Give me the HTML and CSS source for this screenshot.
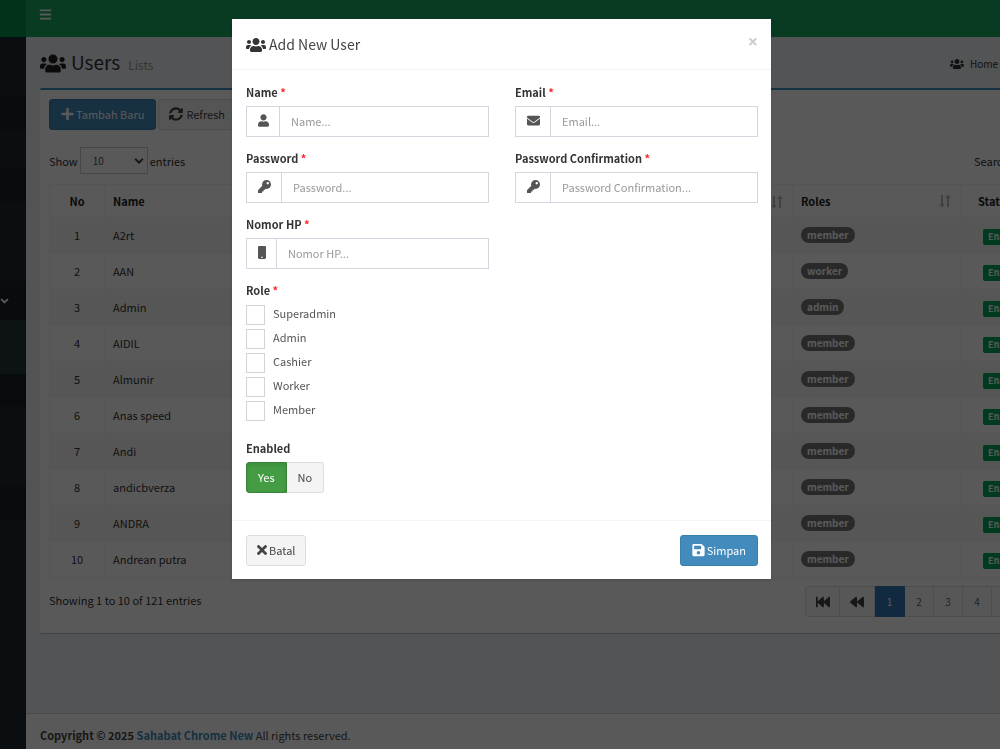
FILE: index.html
```html
<!DOCTYPE html>
<html lang="id">
<head>
<meta charset="utf-8">
<title>Users</title>
<link rel="stylesheet" href="styles.css">
</head>
<body>
<svg class="defs" aria-hidden="true">
  <symbol id="users" viewBox="0 0 640 512"><path d="M96 224c35 0 64-29 64-64s-29-64-64-64-64 29-64 64 29 64 64 64zm448 0c35 0 64-29 64-64s-29-64-64-64-64 29-64 64 29 64 64 64zm32 32h-64c-18 0-34 7-45 19 40 22 69 62 75 109h66c18 0 32-14 32-32v-32c0-35-29-64-64-64zm-256 0c62 0 112-50 112-112S382 32 320 32 208 82 208 144s50 112 112 112zm77 32h-8c-21 10-44 16-69 16s-48-6-69-16h-8c-64 0-115 52-115 115v29c0 26 22 48 48 48h288c26 0 48-22 48-48v-29c0-63-51-115-115-115zm-224-13c-11-12-27-19-45-19H64c-35 0-64 29-64 64v32c0 18 14 32 32 32h66c6-47 35-87 75-109z"/></symbol>
  <symbol id="bars" viewBox="0 0 448 512"><path d="M16 132h416c9 0 16-7 16-16V76c0-9-7-16-16-16H16C7 60 0 67 0 76v40c0 9 7 16 16 16zm0 160h416c9 0 16-7 16-16v-40c0-9-7-16-16-16H16c-9 0-16 7-16 16v40c0 9 7 16 16 16zm0 160h416c9 0 16-7 16-16v-40c0-9-7-16-16-16H16c-9 0-16 7-16 16v40c0 9 7 16 16 16z"/></symbol>
  <symbol id="plus" viewBox="0 0 448 512"><path d="M416 208H272V64c0-18-14-32-32-32h-32c-18 0-32 14-32 32v144H32c-18 0-32 14-32 32v32c0 18 14 32 32 32h144v144c0 18 14 32 32 32h32c18 0 32-14 32-32V304h144c18 0 32-14 32-32v-32c0-18-14-32-32-32z"/></symbol>
  <symbol id="sync" viewBox="0 0 512 512"><path d="M371 143c-32-30-73-47-117-47-78 0-146 54-165 128-1 5-6 9-12 9H20c-7 0-13-7-12-14C29 102 132 8 256 8c68 0 130 27 175 71l36-36c15-15 41-5 41 17v134c0 13-11 24-24 24H350c-21 0-32-26-17-41l38-34zM28 296h134c21 0 32 26 17 41l-39 34c32 30 73 47 117 47 78 0 146-54 165-128 1-5 6-9 12-9h57c8 0 13 7 12 14C483 410 380 504 256 504c-68 0-130-27-175-71l-36 36c-15 15-41 5-41-17V320c0-13 11-24 24-24z"/></symbol>
  <symbol id="user" viewBox="0 0 448 512"><path d="M224 256c71 0 128-57 128-128S295 0 224 0 96 57 96 128s57 128 128 128zm90 32h-17c-22 10-47 16-73 16s-51-6-73-16h-17C60 288 0 348 0 422v42c0 26 22 48 48 48h352c26 0 48-22 48-48v-42c0-74-60-134-134-134z"/></symbol>
  <symbol id="mail" viewBox="0 0 512 512"><path d="M502 191c4-3 10 0 10 5v204c0 26-22 48-48 48H48c-26 0-48-22-48-48V196c0-5 6-8 10-5 22 17 52 40 155 114 21 16 57 48 91 48 34 0 70-33 91-48 103-74 133-97 155-114zM256 320c23 0 57-30 74-42 133-96 143-105 173-129 6-4 9-11 9-19v-18c0-26-22-48-48-48H48c-26 0-48 22-48 48v18c0 8 3 15 9 19 30 24 40 33 173 129 17 12 51 42 74 42z"/></symbol>
  <symbol id="key" viewBox="0 0 512 512"><path d="M512 176c0 97-79 176-176 176-11 0-22-1-33-3l-24 27c-5 5-11 8-18 8h-37v40c0 13-11 24-24 24h-40v40c0 13-11 24-24 24H24c-13 0-24-11-24-24v-78c0-6 3-12 7-17l162-162c-6-17-9-36-9-55C160 79 239 0 336 0s176 79 176 176zM336 128c0 27 21 48 48 48s48-21 48-48-21-48-48-48-48 21-48 48z"/></symbol>
  <symbol id="mobile" viewBox="0 0 320 512"><path d="M272 0H48C22 0 0 22 0 48v416c0 26 22 48 48 48h224c26 0 48-22 48-48V48c0-26-22-48-48-48zM160 480c-18 0-32-14-32-32s14-32 32-32 32 14 32 32-14 32-32 32z"/></symbol>
  <symbol id="times" viewBox="0 0 352 352"><path d="M243 176 343 76c12-12 12-32 0-44l-23-23c-12-12-32-12-44 0L176 109 76 9C64-3 44-3 32 9L9 32c-12 12-12 32 0 44l100 100L9 276c-12 12-12 32 0 44l23 23c12 12 32 12 44 0l100-100 100 100c12 12 32 12 44 0l23-23c12-12 12-32 0-44z"/></symbol>
  <symbol id="save" viewBox="0 0 448 512"><path fill-rule="evenodd" d="m434 130-84-84c-9-9-21-14-34-14H48C22 32 0 54 0 80v352c0 26 22 48 48 48h352c26 0 48-22 48-48V164c0-13-5-25-14-34zM224 416c-35 0-64-29-64-64s29-64 64-64 64 29 64 64-29 64-64 64zm96-305v101c0 7-5 12-12 12H76c-7 0-12-5-12-12V108c0-7 5-12 12-12h229c3 0 6 1 8 3l4 4c2 2 3 5 3 8z"/></symbol>
  <symbol id="fast" viewBox="0 0 512 512"><path d="M0 436V76c0-7 5-12 12-12h40c7 0 12 5 12 12v152L236 71c20-17 52-3 52 25v131L460 71c20-17 52-3 52 25v320c0 28-31 42-52 25L288 285v131c0 28-31 42-52 25L64 285v151c0 7-5 12-12 12H12c-7 0-12-5-12-12z"/></symbol>
  <symbol id="back" viewBox="0 0 512 512"><path d="m12 281 192 160c20 17 52 3 52-25V96c0-28-31-42-52-25L12 231c-16 13-16 37 0 50zm256 0 192 160c20 17 52 3 52-25V96c0-28-31-42-52-25L268 231c-16 13-16 37 0 50z"/></symbol>
  <symbol id="down" viewBox="0 0 12 8"><path d="m1.500 1.500 4.500 4.500 4.500-4.500" fill="none" stroke="currentColor" stroke-width="2.400"/></symbol>
  <symbol id="sort" viewBox="0 0 14 14"><path d="M3 1h2v9h2l-3 3.500L1 10h2zM9 13h2V4h2l-3-3.500L7 4h2z"/></symbol>
</svg>

<div class="app">
  <aside class="sidebar">
    <div class="logo"></div>
    <div class="side-user"></div>
    <div class="side-dark"></div>
    <div class="side-gap"></div>
    <div class="side-dark"></div>
    <div class="side-items"></div>
    <div class="side-open"><svg class="ic side-arrow"><use href="#down"/></svg></div>
    <div class="side-active"></div>
    <div class="side-dark"></div>
    <div class="side-items"></div>
    <div class="side-dark"></div>
  </aside>
  <div class="main">
    <header class="topbar"><button class="toggle" aria-label="Menu"><svg class="ic ic-bars"><use href="#bars"/></svg></button></header>
    <div class="content">
      <div class="page-head">
        <h1><svg class="ic ic-title"><use href="#users"/></svg>Users <small>Lists</small></h1>
        <nav class="crumbs"><a href="#"><svg class="ic ic-crumb"><use href="#users"/></svg>Home</a></nav>
      </div>
      <section class="box">
        <div class="tools">
          <button class="btn primary"><svg class="ic ic-plus"><use href="#plus"/></svg>Tambah Baru</button>
          <button class="btn"><svg class="ic ic-sync"><use href="#sync"/></svg>Refresh</button>
        </div>
        <div class="filters">
          <label class="length">Show <span class="pick"><select><option>10</option></select><svg class="ic pick-arrow"><use href="#down"/></svg></span> entries</label>
          <label class="search">Search: <input type="search"></label>
        </div>
        <table class="grid">
          <colgroup><col class="c-no"><col class="c-name"><col><col class="c-roles"><col class="c-status"></colgroup>
          <thead><tr><th class="no">No</th><th>Name</th><th><svg class="ic sort"><use href="#sort"/></svg></th><th>Roles<svg class="ic sort"><use href="#sort"/></svg></th><th class="st">Status</th></tr></thead>
          <tbody>
            <tr><td class="no">1</td><td>A2rt</td><td></td><td><span class="pill">member</span></td><td class="st"><span class="tag">Enabled</span></td></tr>
            <tr><td class="no">2</td><td>AAN</td><td></td><td><span class="pill">worker</span></td><td class="st"><span class="tag">Enabled</span></td></tr>
            <tr><td class="no">3</td><td>Admin</td><td></td><td><span class="pill">admin</span></td><td class="st"><span class="tag">Enabled</span></td></tr>
            <tr><td class="no">4</td><td>AIDIL</td><td></td><td><span class="pill">member</span></td><td class="st"><span class="tag">Enabled</span></td></tr>
            <tr><td class="no">5</td><td>Almunir</td><td></td><td><span class="pill">member</span></td><td class="st"><span class="tag">Enabled</span></td></tr>
            <tr><td class="no">6</td><td>Anas speed</td><td></td><td><span class="pill">member</span></td><td class="st"><span class="tag">Enabled</span></td></tr>
            <tr><td class="no">7</td><td>Andi</td><td></td><td><span class="pill">member</span></td><td class="st"><span class="tag">Enabled</span></td></tr>
            <tr><td class="no">8</td><td>andicbverza</td><td></td><td><span class="pill">member</span></td><td class="st"><span class="tag">Enabled</span></td></tr>
            <tr><td class="no">9</td><td>ANDRA</td><td></td><td><span class="pill">member</span></td><td class="st"><span class="tag">Enabled</span></td></tr>
            <tr><td class="no">10</td><td>Andrean putra</td><td></td><td><span class="pill">member</span></td><td class="st"><span class="tag">Enabled</span></td></tr>
          </tbody>
        </table>
        <div class="table-foot">
          <span class="info">Showing 1 to 10 of 121 entries</span>
          <nav class="pages">
            <a href="#" class="arrow" aria-label="First"><svg class="ic ic-page"><use href="#fast"/></svg></a><a href="#" class="arrow" aria-label="Previous"><svg class="ic ic-page"><use href="#back"/></svg></a><a href="#" class="current">1</a><a href="#">2</a><a href="#">3</a><a href="#">4</a><a href="#">5</a>
          </nav>
        </div>
      </section>
    </div>
    <footer class="footer"><strong>Copyright © 2025 <a href="#">Sahabat Chrome New</a></strong> All rights reserved.</footer>
  </div>
</div>

<div class="overlay">
  <form class="modal" role="dialog" aria-labelledby="dialog-title">
    <div class="modal-head">
      <h2 id="dialog-title"><svg class="ic ic-modal"><use href="#users"/></svg>Add New User</h2>
      <button type="button" class="close" aria-label="Close">×</button>
    </div>
    <div class="modal-body">
      <div class="fields">
        <div class="field"><label for="name">Name <i>*</i></label><div class="group"><span class="addon"><svg class="ic ic-user"><use href="#user"/></svg></span><input id="name" type="text" placeholder="Name..."></div></div>
        <div class="field"><label for="email">Email <i>*</i></label><div class="group"><span class="addon"><svg class="ic ic-wide"><use href="#mail"/></svg></span><input id="email" type="email" placeholder="Email..."></div></div>
        <div class="field"><label for="pass">Password <i>*</i></label><div class="group"><span class="addon"><svg class="ic ic-wide"><use href="#key"/></svg></span><input id="pass" type="password" placeholder="Password..."></div></div>
        <div class="field"><label for="pass2">Password Confirmation <i>*</i></label><div class="group"><span class="addon"><svg class="ic ic-wide"><use href="#key"/></svg></span><input id="pass2" type="password" placeholder="Password Confirmation..."></div></div>
        <div class="field"><label for="hp">Nomor HP <i>*</i></label><div class="group"><span class="addon"><svg class="ic ic-mobile"><use href="#mobile"/></svg></span><input id="hp" type="text" placeholder="Nomor HP..."></div></div>
      </div>
      <fieldset class="roles">
        <legend>Role <i>*</i></legend>
        <label><input type="checkbox">Superadmin</label>
        <label><input type="checkbox">Admin</label>
        <label><input type="checkbox">Cashier</label>
        <label><input type="checkbox">Worker</label>
        <label><input type="checkbox">Member</label>
      </fieldset>
      <fieldset class="enabled">
        <legend>Enabled</legend>
        <div class="switch"><button type="button" class="btn yes">Yes</button><button type="button" class="btn no-btn">No</button></div>
      </fieldset>
    </div>
    <div class="modal-foot">
      <button type="button" class="btn"><svg class="ic ic-times"><use href="#times"/></svg>Batal</button>
      <button type="submit" class="btn primary"><svg class="ic ic-save"><use href="#save"/></svg>Simpan</button>
    </div>
  </form>
</div>
</body>
</html>
```

FILE: styles.css
```css
* { box-sizing: border-box; }
body { margin: 0; font: 11px/18px "Noto Sans CJK SC", "Noto Sans", sans-serif; color: #333; overflow: hidden; }
button, input, select { font: inherit; color: inherit; }
a { color: inherit; text-decoration: none; }
h1, h2 { margin: 0; font-weight: 400; }
fieldset { border: 0; margin: 0; padding: 0; min-width: 0; }
legend { padding: 0; }
i { font-style: normal; color: #f22; }
.defs { position: absolute; width: 0; height: 0; }
.ic { fill: currentColor; flex: none; display: block; }

.app { display: flex; min-height: 100vh; overflow: hidden; }
.sidebar { flex: none; width: 26px; background: #1f2a2f; display: flex; flex-direction: column; }
.logo { height: 37px; background: #0a8f4e; }
.side-user { height: 59px; }
.side-dark { height: 33px; background: #182022; }
.side-gap { height: 39px; }
.side-items { height: 80px; }
.side-open { height: 39px; background: #1b2427; display: flex; align-items: center; color: #fff; }
.side-arrow { width: 9px; height: 6px; }
.side-active { height: 54px; background: #27343a; }

.main { flex: none; width: calc(100% + 145px); display: flex; flex-direction: column; background: #ecf0f5; }
.topbar { height: 37px; background: #18a862; padding: 8px 13px; }
.toggle { display: block; border: 0; background: none; padding: 0; color: #fff; }
.ic-bars { width: 13px; height: 13px; }
.content { flex: 1; padding: 0 14px 20px; }
.page-head { height: 51px; padding-top: 2px; display: flex; justify-content: space-between; align-items: center; }
h1 { display: flex; align-items: baseline; font-size: 19px; line-height: 28px; }
h1 small { font-size: 12px; color: #999; margin-left: 8px; }
.ic-title { width: 26px; height: 21px; margin-right: 5px; align-self: center; color: #222; }
.crumbs { width: 207px; font-size: 10px; }
.crumbs a { display: flex; align-items: center; gap: 6px; }
.ic-crumb { width: 14px; height: 12px; }

.box { background: #fff; border-top: 2px solid #3c8dbc; border-radius: 2px; padding: 9px 9px 16px; box-shadow: 0 1px 1px rgba(0,0,0,.2); }
.tools { display: flex; gap: 2px; }
.btn { height: 31px; display: flex; align-items: center; padding: 0 10px 2px; border: 1px solid #ddd; border-radius: 3px; background: #f4f4f4; color: #444; white-space: nowrap; }
.btn.primary { background: #428bbc; border-color: #3a80ad; color: #fff; padding: 0 11px 2px; }
.ic-plus { width: 13px; height: 14px; margin-right: 2px; }
.ic-sync { width: 14px; height: 14px; margin-right: 3px; }
.filters { display: flex; justify-content: space-between; align-items: center; padding: 17px 0 10px; }
.filters label { display: flex; align-items: center; gap: 2px; line-height: 16px; }
.search { width: 174px; }
.search input { flex: 1; min-width: 0; height: 27px; border: 1px solid #ccc; }
.pick { position: relative; display: block; }
.pick select { appearance: none; display: block; width: 68px; height: 27px; border: 1px solid #ccc; background: #fff; padding: 0 12px; font-size: 10px; border-radius: 0; color: #555; }
.pick-arrow { position: absolute; right: 4px; top: 10px; width: 10px; height: 8px; }
.grid { width: 100%; table-layout: fixed; border-collapse: collapse; border: 1px solid #f0f0f0; }
.c-no { width: 55px; }
.c-name { width: 220px; }
.c-roles { width: 168px; }
.c-status { width: 187px; }
.grid th, .grid td { border: 1px solid #f2f2f2; height: 36px; padding: 0 8px 2px; text-align: left; }
.grid th { height: 33px; padding-bottom: 0; color: #222; }
.grid tbody tr:nth-child(odd) { background: #f6f6f6; }
.grid .no { text-align: center; }
.grid th.st { padding-left: 17px; }
.grid td.st { padding-left: 22px; }
.sort { float: right; width: 14px; height: 14px; margin-top: 2px; color: #bbb; }
.pill, .tag { display: block; width: fit-content; line-height: 16px; font-weight: 700; color: #fff; }
.pill { background: #777; border-radius: 8px; padding: 0 6px; font-size: 10px; }
.tag { background: #00a65a; border-radius: 2px; padding: 0 5px; font-size: 9px; margin-top: 4px; }
.table-foot { display: flex; justify-content: space-between; padding-top: 8px; }
.info { padding-top: 5px; }
.pages { display: flex; width: 343px; }
.pages a { width: 29px; height: 31px; border: 1px solid #ddd; border-left: 0; display: flex; align-items: center; justify-content: center; font-size: 10px; background: #fafafa; color: #666; }
.pages .arrow { width: 35px; color: #444; }
.pages .arrow:first-child { border-left: 1px solid #ddd; border-radius: 3px 0 0 3px; }
.pages .current { background: #337ab7; border-color: #337ab7; color: #fff; width: 30px; }
.ic-page { width: 14px; height: 14px; }
.footer { height: 36px; border-top: 1px solid #d2d6de; background: #fff; padding: 12px 14px 0; color: #444; white-space: nowrap; }
.footer a { color: #3c8dbc; }

.overlay { position: fixed; inset: 0; background: rgba(0,0,0,.65); padding: 19px 0 0 3px; overflow: hidden; }
.modal { max-width: 539px; margin: 0 auto; background: #fff; box-shadow: 0 2px 3px rgba(0,0,0,.125); color: #333; }
.modal-head { display: flex; justify-content: space-between; align-items: flex-start; padding: 14px 13px 13px 14px; border-bottom: 1px solid #f4f4f4; }
h2 { display: flex; align-items: center; gap: 3px; font-size: 14px; line-height: 23px; color: #444; }
.ic-modal { width: 20px; height: 16px; color: #333; }
.close { border: 0; background: none; padding: 0; font-family: "Open Sans", sans-serif; font-size: 18px; line-height: 16px; font-weight: 700; color: #ccc; }
.modal-body { padding: 14px 13px 27px 14px; border-bottom: 1px solid #f4f4f4; }
.fields { display: grid; grid-template-columns: 1fr 1fr; column-gap: 26px; row-gap: 13px; }
.field label, legend { display: block; line-height: 17px; margin-bottom: 5px; font-weight: 700; }
.group { display: flex; height: 31px; border: 1px solid #d2d6de; }
.addon { display: flex; align-items: center; padding: 0 10px 2px 11px; border-right: 1px solid #d2d6de; color: #555; }
.group input { flex: 1; min-width: 0; border: 0; padding: 0 11px 1px; background: none; }
.group input::placeholder { color: #999; opacity: 1; }
.ic-user { width: 11px; height: 13px; }
.ic-wide { width: 13px; height: 13px; }
.ic-mobile { width: 8px; height: 13px; }
.roles { margin-top: 13px; }
.roles label { display: flex; align-items: flex-start; gap: 8px; height: 19px; line-height: 17px; margin-bottom: 5px; color: #555; }
.roles legend { margin-bottom: 6px; }
.roles input { appearance: none; margin: 0; width: 19px; height: 20px; border: 1px solid #d5d5d0; background: #fff; flex: none; }
.enabled { margin-top: 15px; }
.switch { display: flex; }
.switch .btn { padding: 0 11px 2px; }
.switch .yes { background: #449d44; border-color: #398439; color: #fff; border-radius: 3px 0 0 3px; box-shadow: inset 0 2px 4px rgba(0,0,0,.125); }
.switch .no-btn { border-left: 0; border-radius: 0 3px 3px 0; }
.modal-foot { display: flex; justify-content: space-between; padding: 14px 13px 13px 14px; }
.ic-times { width: 10px; height: 10px; margin-right: 2px; }
.ic-save { width: 13px; height: 14px; margin-right: 2px; }
```
